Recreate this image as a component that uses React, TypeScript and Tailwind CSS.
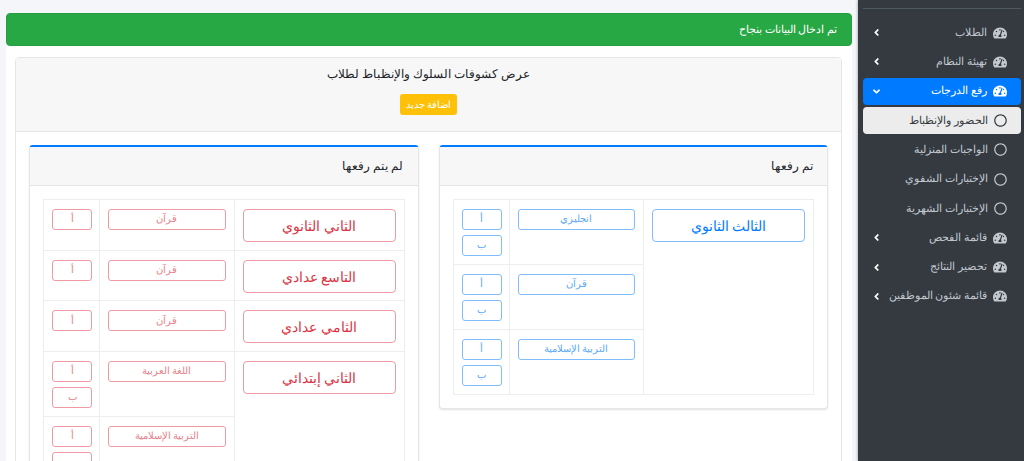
import React from 'react';
import { FaAngleDown, FaAngleLeft, FaRegCircle, FaTachometerAlt } from 'react-icons/fa';

type Subject = { name: string; sections: string[] };
type Grade = { name: string; subjects: Subject[] };

const uploaded: Grade[] = [
    {
        name: 'الثالث الثانوي',
        subjects: [
            { name: 'انجليزي', sections: ['أ', 'ب'] },
            { name: 'قرآن', sections: ['أ', 'ب'] },
            { name: 'التربية الإسلامية', sections: ['أ', 'ب'] },
        ],
    },
];

const pending: Grade[] = [
    { name: 'الثاني الثانوي', subjects: [{ name: 'قرآن', sections: ['أ'] }] },
    { name: 'التاسع عدادي', subjects: [{ name: 'قرآن', sections: ['أ'] }] },
    { name: 'الثامي عدادي', subjects: [{ name: 'قرآن', sections: ['أ'] }] },
    {
        name: 'الثاني إبتدائي',
        subjects: [
            { name: 'اللغة العربية', sections: ['أ', 'ب'] },
            { name: 'التربية الإسلامية', sections: ['أ', 'ب'] },
        ],
    },
];

const menuTop = ['الطلاب', 'تهيئة النظام'];
const subMenu = ['الواجبات المنزلية', 'الإختبارات الشفوي', 'الإختبارات الشهرية'];
const menuBottom = ['قائمة الفحص', 'تحضير النتائج', 'قائمة شئون الموظفين'];

const GradeTable = ({ grades, red }: { grades: Grade[]; red?: boolean }) => {
    const big = red ? 'border-[#f19aa3] text-[#dc3545]' : 'border-[#80bdff] text-[#007bff]';
    const small = red ? 'border-[#f19aa3] text-[#e8808a]' : 'border-[#80bdff] text-[#5aa8fb]';

    return (
        <div className="border-t border-r border-[#eceef0]">
            {grades.map((grade) => (
                <div key={grade.name} className="flex">
                    <div className="w-[170px] shrink-0 border-b border-l border-[#eceef0] px-2 pt-[9px]">
                        <div className={`h-[33px] rounded border flex items-center justify-center text-[14px] ${big}`}>{grade.name}</div>
                    </div>
                    <div className="flex-1">
                        {grade.subjects.map((subject) => (
                            <div key={subject.name} className="flex">
                                <div className="flex-1 border-b border-l border-[#eceef0] px-2 pt-[9px]">
                                    <div className={`h-[21px] rounded-[3px] border flex items-center justify-center text-[9.5px] ${small}`}>{subject.name}</div>
                                </div>
                                <div className={`w-[56px] shrink-0 border-b border-l border-[#eceef0] pr-[7px] pl-[8px] pt-[9px] ${grade.subjects.length === 1 ? 'pb-[19.6px]' : 'pb-[8px]'}`}>
                                    {subject.sections.map((section, i) => (
                                        <div key={section} className={`h-[21px] rounded-[3px] border flex items-center justify-center text-[9.5px] ${small} ${i > 0 ? 'mt-[5px]' : ''}`}>{section}</div>
                                    ))}
                                </div>
                            </div>
                        ))}
                    </div>
                </div>
            ))}
        </div>
    );
};

const InnerCard = ({ title, grades, red }: { title: string; grades: Grade[]; red?: boolean }) => (
    <div className="flex-1 self-start rounded border border-[#e4e6e8] border-t-2 border-t-[#007bff] bg-white shadow-[0_1px_2px_rgba(0,0,0,0.12)]">
        <div className="h-[39px] bg-[#f7f7f7] border-b border-[#e4e6e8] px-[14px] flex items-center text-[12px] text-[#212529]">{title}</div>
        <div className="p-[13px]">
            <GradeTable grades={grades} red={red} />
        </div>
    </div>
);

const MenuRow = ({ label }: { label: string }) => (
    <div className="h-[27.3px] mb-[2px] flex items-center pr-[14px] pl-[8px] text-[10.5px] text-[#c2c7d0] whitespace-nowrap">
        <FaTachometerAlt className="text-[14px] ml-[6px] shrink-0" />
        <span>{label}</span>
        <FaAngleLeft className="mr-auto text-[11px] text-white shrink-0" />
    </div>
);

const SubRow = ({ label }: { label: string }) => (
    <div className="h-[27.3px] mb-[2px] flex items-center pr-[14px] text-[10.5px] text-[#c2c7d0] whitespace-nowrap">
        <FaRegCircle className="text-[13px] ml-[6px] shrink-0" />
        <span>{label}</span>
    </div>
);

export default function App() {
    return (
        <div dir="rtl" className="flex h-[461px] overflow-hidden bg-[#f4f6f9] font-['Noto_Sans',sans-serif]">
            <aside className="w-[166px] shrink-0 bg-[#343a40] pr-[3px] pl-[5px] shadow-[0_0_3px_rgba(0,0,0,0.4)]">
                <div className="h-[9px] border-b border-[#4f5962] mb-[10px]" />
                {menuTop.map((label) => (
                    <MenuRow key={label} label={label} />
                ))}
                <div className="h-[27.3px] mb-[2px] rounded bg-[#007bff] flex items-center pr-[14px] pl-[8px] text-[10.5px] text-white">
                    <FaTachometerAlt className="text-[14px] ml-[6px] shrink-0" />
                    <span>رفع الدرجات</span>
                    <FaAngleDown className="mr-auto text-[11px]" />
                </div>
                <div className="h-[27.3px] mb-[2px] rounded bg-[#ececec] flex items-center pr-[14px] text-[10.5px] text-[#343a40]">
                    <FaRegCircle className="text-[13px] ml-[6px] shrink-0" />
                    <span>الحضور والإنظباط</span>
                </div>
                {subMenu.map((label) => (
                    <SubRow key={label} label={label} />
                ))}
                {menuBottom.map((label) => (
                    <MenuRow key={label} label={label} />
                ))}
            </aside>

            <main className="flex-1 min-w-0 pt-[13px] px-[6px]">
                <div className="h-[33px] rounded bg-[#28a745] border border-[#26a041] flex items-center px-[14px] text-[10.5px] text-white">تم ادخال البيانات بنجاح</div>
                <div className="bg-white h-full pr-[10px] pl-[9px] pt-[11px]">
                    <div className="rounded border border-[#e4e6e8] h-full">
                        <div className="h-[74px] bg-[#f7f7f7] border-b border-[#e4e6e8] flex flex-col items-center pt-[7px]">
                            <div className="text-[12px] leading-[18px] text-[#212529]">عرض كشوفات السلوك والإنظباط لطلاب</div>
                            <div className="mt-[11px] h-[21px] w-[57px] rounded-[3px] bg-[#ffc107] flex items-center justify-center text-[10px] text-white">اضافة جديد</div>
                        </div>
                        <div className="flex items-start gap-[20px] pt-[13px] px-[13px]">
                            <InnerCard title="تم رفعها" grades={uploaded} />
                            <InnerCard title="لم يتم رفعها" grades={pending} red />
                        </div>
                    </div>
                </div>
            </main>
        </div>
    );
}
